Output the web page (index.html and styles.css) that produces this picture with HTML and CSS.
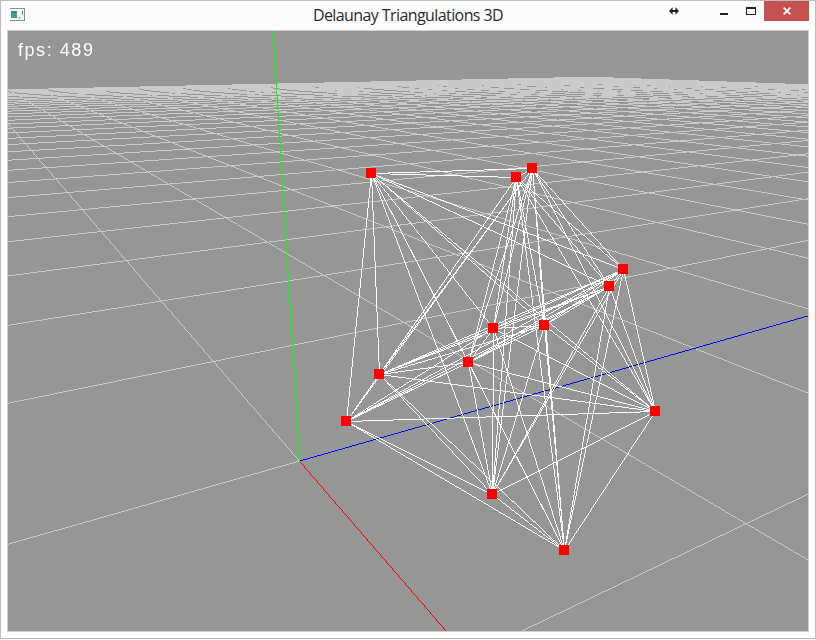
FILE: index.html
```
<!DOCTYPE html>
<html lang="en">
<head>
<meta charset="utf-8">
<title>Delaunay Triangulations 3D</title>
<link rel="stylesheet" href="styles.css">
</head>
<body>
<div class="window">
  <header class="titlebar">
    <svg class="app-icon" width="15" height="13" viewBox="0 0 15 13" shape-rendering="crispEdges">
      <rect width="15" height="13" fill="#858b90"/>
      <rect y="1" width="14" height="11" fill="#f8f8f8"/>
      <rect x="1" y="3" width="6" height="7" fill="#4a9a88"/>
      <rect x="1" y="3" width="6" height="2" fill="#467fa0"/>
      <rect x="12" y="3" width="1" height="2" fill="#2864b4"/>
      <rect x="12" y="5" width="1" height="2" fill="#4aaa58"/>
      <rect x="8" y="9" width="3" height="2" fill="#cccccc"/>
    </svg>
    <h1 class="title">Delaunay Triangulations 3D</h1>
    <svg class="resize" width="10" height="8" viewBox="0 0 10 8"><path d="M0 4 3.6 .2V3h2.8V.2L10 4 6.4 7.8V5H3.6v2.8z" fill="#222"/></svg>
    <div class="controls">
      <span class="minimize"></span>
      <span class="maximize"></span>
      <span class="close"><svg width="8" height="8" viewBox="0 0 8 8"><path d="M.7.7l6.6 6.6M7.3.7.7 7.3" stroke="#fff" stroke-width="1.8"/></svg></span>
    </div>
  </header>
  <main class="viewport">
    <canvas id="scene" width="800" height="600"></canvas>
    <div class="fps">fps: 489</div>
  </main>
</div>
<script src="scene.js"></script>
</body>
</html>
```
FILE: styles.css
```
* { box-sizing: border-box; }
body { margin: 0; background: #fcfcfc; }
.window {
  width: 816px;
  height: 639px;
  padding: 0 6px;
  border: 1px solid #bdbdbd;
  background: #fcfcfc;
  overflow: hidden;
}
.titlebar {
  position: relative;
  height: 29px;
  display: flex;
  justify-content: center;
}
.title {
  margin: 0;
  font: 400 16px/29px "Open Sans", "Noto Sans", sans-serif;
  letter-spacing: -0.59px;
  color: #2b2b2b;
  white-space: nowrap;
}
.app-icon { position: absolute; left: 3px; top: 7px; }
.resize { position: absolute; left: 662px; top: 6px; }
.controls {
  position: absolute;
  right: 0;
  top: 0;
  display: flex;
  align-items: flex-start;
}
.minimize { width: 8px; height: 2px; margin: 12px 18px 0 0; background: #222; }
.maximize { width: 10px; height: 8px; margin: 6px 8px 0 0; border: 1px solid #222; border-top-width: 2px; }
.close {
  width: 45px;
  height: 20px;
  display: grid;
  place-items: center;
  background: #c75050;
}
.viewport {
  position: relative;
  width: 802px;
  height: 602px;
  border: 1px solid #d0d0d0;
  background: #969696;
}
#scene { display: block; }
.fps {
  position: absolute;
  left: 10px;
  top: 8px;
  font: 18px/22px "Liberation Sans", sans-serif;
  letter-spacing: 1.55px;
  color: #fff;
  white-space: pre;
}
```
FILE: scene.js
```
const ctx = document.getElementById('scene').getContext('2d');
const OX = 8, OY = 31;
const EXTENT = 32;

// One pixel per step along the major axis, no smoothing.
function line(x0, y0, x1, y1, color) {
  ctx.fillStyle = color;
  x0 -= OX; x1 -= OX; y0 -= OY; y1 -= OY;
  const dx = x1 - x0, dy = y1 - y0;
  if (Math.abs(dx) >= Math.abs(dy)) {
    if (dx < 0) return line(x1 + OX, y1 + OY, x0 + OX, y0 + OY, color);
    const end = Math.min(799, Math.round(x1));
    for (let x = Math.max(0, Math.round(x0)); x <= end; x++)
      ctx.fillRect(x, Math.round(y0 + (x - x0) * dy / dx), 1, 1);
  } else {
    if (dy < 0) return line(x1 + OX, y1 + OY, x0 + OX, y0 + OY, color);
    const end = Math.min(599, Math.round(y1));
    for (let y = Math.max(0, Math.round(y0)); y <= end; y++)
      ctx.fillRect(Math.round(x0 + (y - y0) * dx / dy), y, 1, 1);
  }
}

// Perspective projection of the ground plane.
const depth = (a, b) => 1 + 0.325 * a + 0.1905 * b;
function project(a, b) {
  const w = depth(a, b);
  return [(299.2 - 16.7 * a + 329.8 * b) / w - 0.3, (460.7 + 17.7 * a + 9.9 * b) / w - 0.1];
}
function ground(a0, b0, a1, b1, color) {
  const near = 0.1;
  const w0 = depth(a0, b0), w1 = depth(a1, b1);
  if (w0 < near && w1 < near) return;
  if (w0 < near) {
    const t = (near - w0) / (w1 - w0);
    a0 += (a1 - a0) * t; b0 += (b1 - b0) * t;
  } else if (w1 < near) {
    const t = (near - w1) / (w0 - w1);
    a1 += (a0 - a1) * t; b1 += (b0 - b1) * t;
  }
  line(...project(a0, b0), ...project(a1, b1), color);
}

for (let i = -EXTENT; i <= EXTENT; i++) {
  ground(i, -EXTENT, i, EXTENT, '#cacaca');
  ground(-EXTENT, i, EXTENT, i, '#cacaca');
}
ground(0, 0, -EXTENT, 0, '#ff0000');
ground(0, 0, 0, EXTENT, '#0000ff');
line(299.3, 461, 272.6, 31, '#00ff00');

const points = [
  [371, 173], [532, 168], [516, 177], [623, 269], [609, 286], [493, 328], [544, 325],
  [468, 362], [379, 374], [346, 421], [655, 411], [492, 494], [564, 550]
];
points.forEach((p, i) => points.slice(i + 1).forEach(q => line(...p, ...q, '#ffffff')));
ctx.fillStyle = '#ff0000';
points.forEach(([x, y]) => ctx.fillRect(x - OX - 5, y - OY - 5, 10, 10));
```
